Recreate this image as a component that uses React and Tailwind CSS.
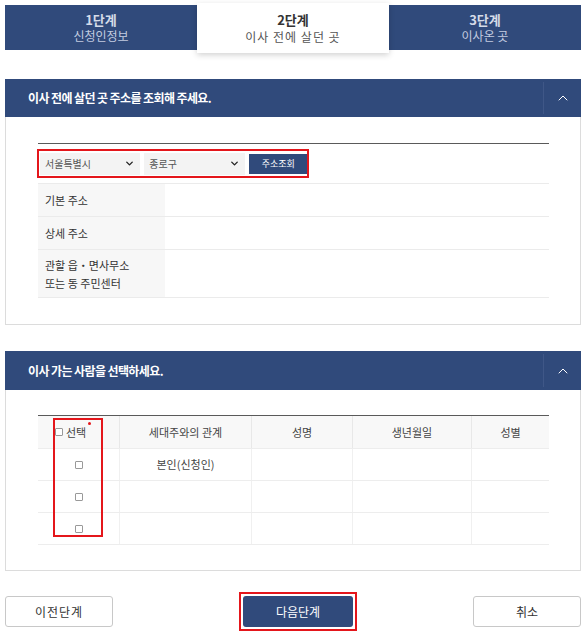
import { ChevronUp, ChevronDown } from 'lucide-react';

const NAVY = 'bg-[#304a7b]';

const Tab = ({ step, label, active }) => (
    active ? (
        <div className="relative z-10 -mt-[2px] h-[50px] bg-white shadow-[0_2px_6px_rgba(0,0,0,0.18)] flex flex-col items-center justify-center leading-tight">
            <span className="text-[13px] font-bold text-[#333]">{step}</span>
            <span className="text-[12px] text-[#555] tracking-[1px]">{label}</span>
        </div>
    ) : (
        <div className={`${NAVY} h-[45px] flex flex-col items-center justify-center leading-tight`}>
            <span className="text-[13px] font-bold text-[#d5dbe8]">{step}</span>
            <span className="text-[12px] text-[#c3cce0]">{label}</span>
        </div>
    )
);

const SectionHeader = ({ title, h }) => (
    <div className={`${NAVY} ${h} flex items-stretch`}>
        <div className="flex-1 flex items-center pl-[23px] text-[12px] font-bold text-white tracking-[-0.6px]">{title}</div>
        <div className="w-[38px] my-[3px] border-l border-[#3f5787] flex items-center justify-center">
            <ChevronUp className="w-[16px] h-[16px] text-white" strokeWidth={1.5} />
        </div>
    </div>
);

const Select = ({ value, w }) => (
    <div className={`${w} h-[22px] bg-[#f3f3f3] flex items-center justify-between px-[5px] text-[10px] text-[#555]`}>
        <span>{value}</span>
        <ChevronDown className="w-[11px] h-[11px] text-[#222]" strokeWidth={3} />
    </div>
);

const Box = () => (
    <span className="inline-block w-[8px] h-[8px] border border-[#999] rounded-[1px] bg-white" />
);

const AddressRow = ({ label, h }) => (
    <div className={`flex ${h} border-b border-[#ebebeb]`}>
        <div className="w-[127px] bg-[#f7f7f7] pl-[7px] flex flex-col justify-center text-[11px] text-[#333] leading-[18px]">
            {label}
        </div>
        <div className="flex-1" />
    </div>
);

const cols = ['w-[82px]', 'w-[132px]', 'w-[101px]', 'w-[119px]', 'flex-1'];

const App = () => {
    const rows = [['', '본인(신청인)', '', '', ''], ['', '', '', '', ''], ['', '', '', '', '']];

    return (
        <div className="w-[588px] h-[634px] bg-white px-[5px] pt-[5px] overflow-hidden font-['Noto_Sans_CJK_KR','Noto_Sans',sans-serif]">
            {/* steps */}
            <div className="grid grid-cols-3 w-[576px] items-start">
                <Tab step="1단계" label="신청인정보" />
                <Tab step="2단계" label="이사 전에 살던 곳" active />
                <Tab step="3단계" label="이사온 곳" />
            </div>

            {/* address section */}
            <div className="mt-[26px] w-[576px]">
                <SectionHeader title="이사 전에 살던 곳 주소를 조회해 주세요." h="h-[38px]" />
                <div className="border border-t-0 border-[#dcdcdc] pl-[32px] pr-[31px] pt-[26px] pb-[26px]">
                    <div className="border-t border-[#5a5a5a]">
                        <div className="h-[40px] py-[5px] border-b border-[#ebebeb]">
                            <div className="-ml-[1px] w-[272px] h-[29px] border-2 border-[#e4161b] flex items-center gap-[4px] pl-[1px]">
                                <Select value="서울특별시" w="w-[101px]" />
                                <Select value="종로구" w="w-[102px]" />
                                <button className={`${NAVY} w-[58px] h-[20px] text-[9px] text-white`}>주소조회</button>
                            </div>
                        </div>
                        <AddressRow label="기본 주소" h="h-[33px]" />
                        <AddressRow label="상세 주소" h="h-[33px]" />
                        <AddressRow label={<><span>관할 읍・면사무소</span><span>또는 동 주민센터</span></>} h="h-[48px]" />
                    </div>
                </div>
            </div>

            {/* people section */}
            <div className="mt-[26px] w-[576px]">
                <SectionHeader title="이사 가는 사람을 선택하세요." h="h-[39px]" />
                <div className="border border-t-0 border-[#dcdcdc] pl-[32px] pr-[31px] pt-[25px] pb-[25px]">
                    <div className="relative border-t border-[#5a5a5a] text-[11px] text-[#444]">
                        <div className="flex h-[32px] bg-[#f8f8f8]">
                            <div className={`${cols[0]} border-r border-[#e8e8e8] flex items-center pl-[17px] gap-[3px]`}>
                                <Box />
                                <span className="relative">선택<span className="absolute -top-[2px] -right-[5px] w-[3px] h-[3px] rounded-full bg-[#e4161b]" /></span>
                            </div>
                            {['세대주와의 관계', '성명', '생년월일', '성별'].map((t, i) => (
                                <div key={t} className={`${cols[i + 1]} ${i < 3 ? 'border-r border-[#e8e8e8]' : ''} flex items-center justify-center`}>{t}</div>
                            ))}
                        </div>
                        {rows.map((r, ri) => (
                            <div key={ri} className="flex h-[32px] border-t border-[#ededed]">
                                {r.map((c, ci) => (
                                    <div key={ci} className={`${cols[ci]} ${ci < 4 ? 'border-r border-[#f0f0f0]' : ''} flex items-center justify-center`}>
                                        {ci === 0 ? <Box /> : c}
                                    </div>
                                ))}
                            </div>
                        ))}
                        <div className="border-t border-[#ededed]" />
                        {/* highlight */}
                        <div className="absolute left-[15px] top-[2px] w-[50px] h-[119px] border-2 border-[#e4161b] pointer-events-none" />
                    </div>
                </div>
            </div>

            {/* buttons */}
            <div className="mt-[21px] w-[576px] flex items-center">
                <button className="w-[108px] h-[31px] border border-[#c8c8c8] rounded-[3px] bg-white text-[12px] text-[#333] tracking-[1px]">이전단계</button>
                <div className="ml-[126px] border-2 border-[#e4161b] p-[2px]">
                    <button className={`${NAVY} w-[110px] h-[31px] rounded-[3px] text-[12px] text-white block`}>다음단계</button>
                </div>
                <button className="ml-auto w-[108px] h-[31px] border border-[#c8c8c8] rounded-[3px] bg-white text-[12px] text-[#333]">취소</button>
            </div>
        </div>
    );
};

export default App;
